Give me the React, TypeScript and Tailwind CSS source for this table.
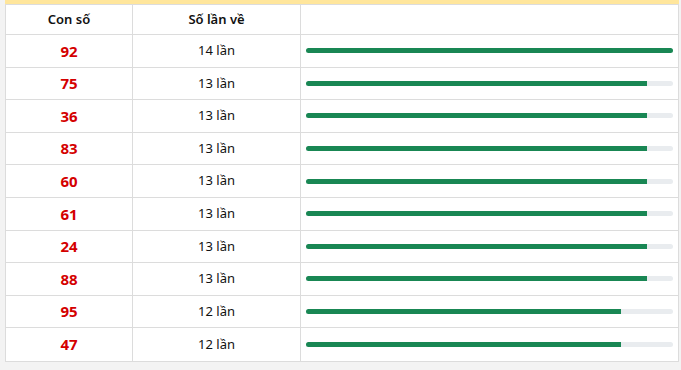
const rows = [
  { num: "92", count: 14 },
  { num: "75", count: 13 },
  { num: "36", count: 13 },
  { num: "83", count: 13 },
  { num: "60", count: 13 },
  { num: "61", count: 13 },
  { num: "24", count: 13 },
  { num: "88", count: 13 },
  { num: "95", count: 12 },
  { num: "47", count: 12 },
];

const max = 14;

export default function App() {
  return (
    <div className="min-h-[370px] w-[681px] bg-[#f3f3f3] pl-[5px] pr-[2px] font-['Noto_Sans','Open_Sans',sans-serif] text-[#111]">
      <div className="border-t-4 border-[#ffe69c] bg-white">
        <div className="border-x border-b border-t border-[#dcdcdc]">
          <div className="grid h-[30px] grid-cols-[127px_168px_1fr] border-b border-[#dcdcdc] text-[13px] font-semibold">
            <div className="flex items-center justify-center border-r border-[#dcdcdc]">Con số</div>
            <div className="flex items-center justify-center border-r border-[#dcdcdc]">Số lần về</div>
            <div />
          </div>
          {rows.map((r, i) => (
            <div
              key={r.num}
              className={`grid h-[32.6px] grid-cols-[127px_168px_1fr] ${i < rows.length - 1 ? "border-b border-[#dcdcdc]" : ""}`}
            >
              <div className="flex items-center justify-center border-r border-[#dcdcdc] text-[15px] font-bold text-[#d40000]">
                {r.num}
              </div>
              <div className="flex items-center justify-center border-r border-[#dcdcdc] text-[13px]">
                {r.count} lần
              </div>
              <div className="flex items-center px-[5px]">
                <div className="h-[5px] w-full overflow-hidden rounded-full bg-[#e9ecef]">
                  <div className="h-full bg-[#198754]" style={{ width: `${(r.count / max) * 100}%` }} />
                </div>
              </div>
            </div>
          ))}
        </div>
      </div>
    </div>
  );
}
